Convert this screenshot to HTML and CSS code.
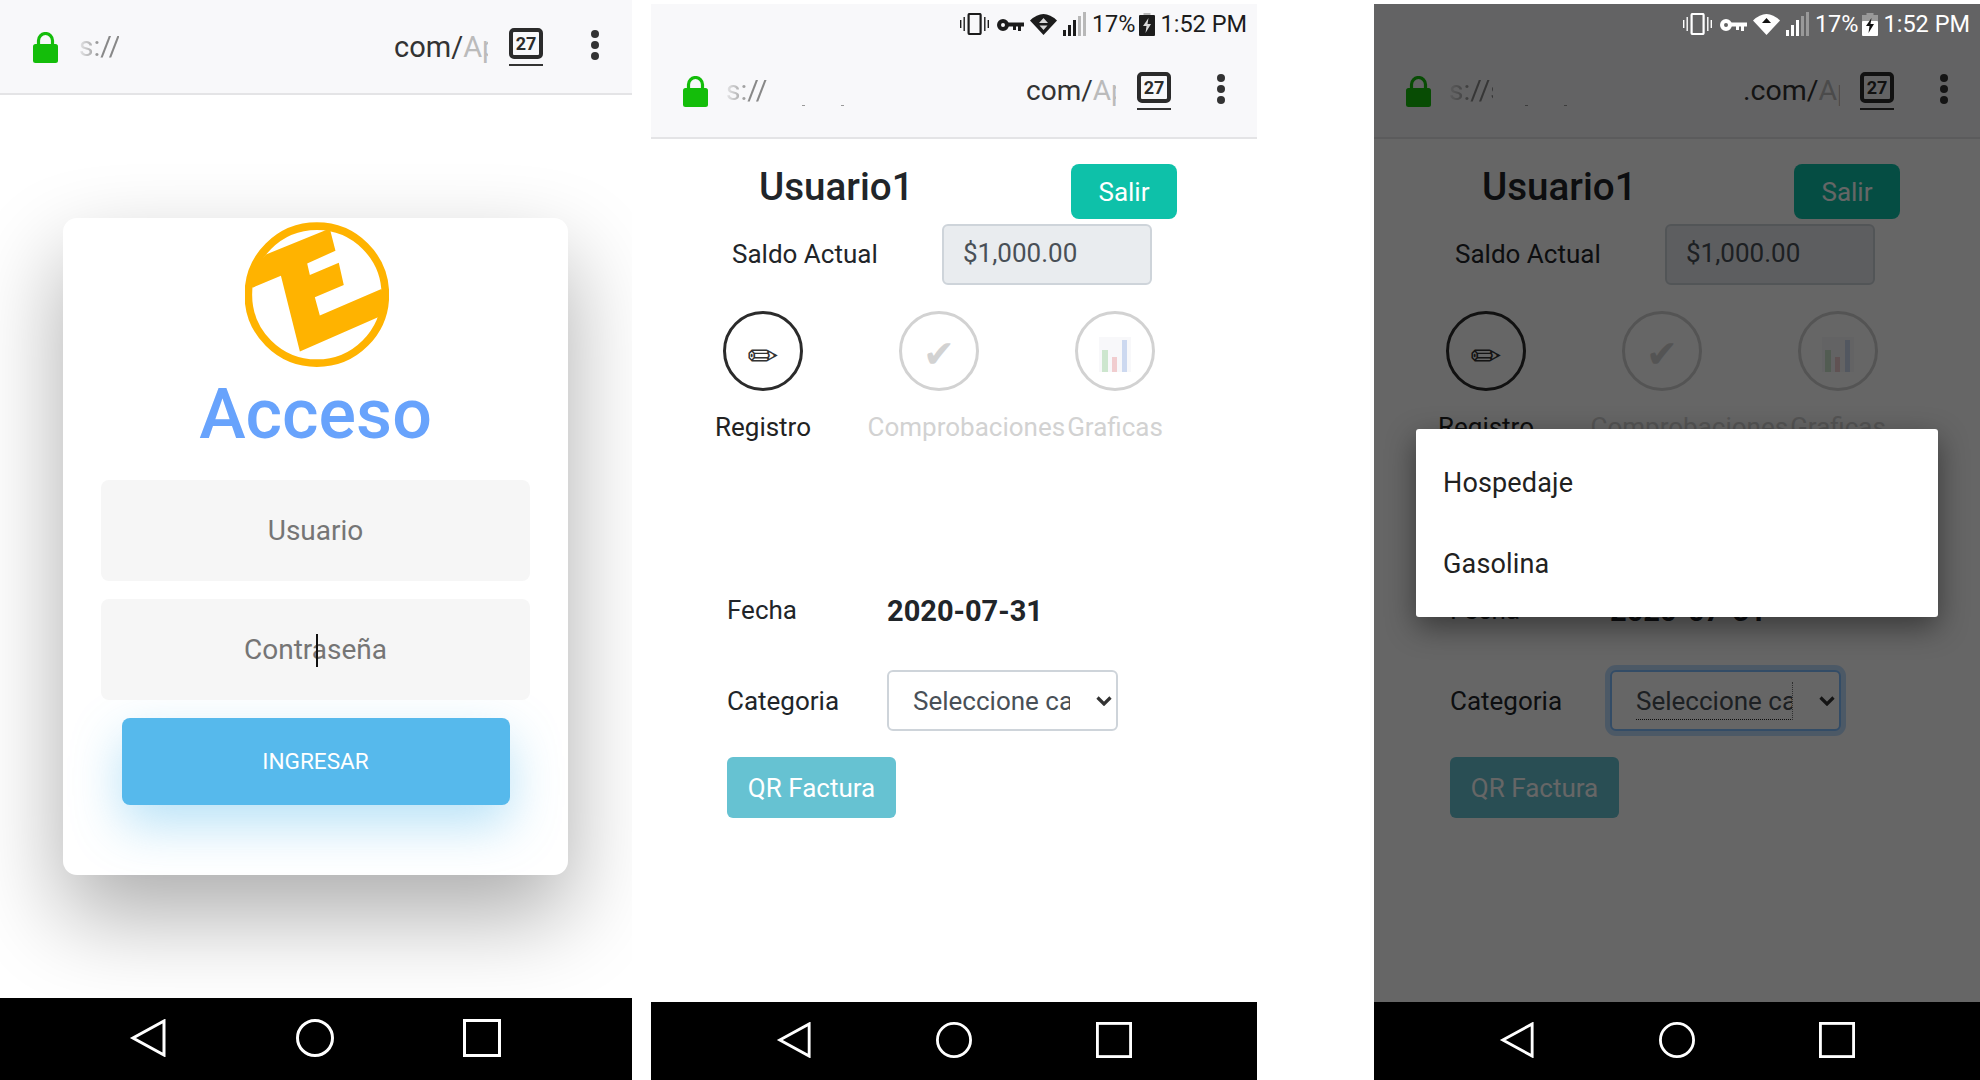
FILE: index.html
```html
<!DOCTYPE html>
<html lang="en">
<head>
    <meta charset="UTF-8">
    <title>Acceso</title>
    <link rel="stylesheet" href="styles.css">
</head>
<body>
    <!-- Login -->
    <section class="phone phone-login">
        <div class="chrome">
            <div class="url-bar">
                <svg class="lock" viewBox="0 0 25 31"><path d="M5.5 14V8.5a7 7 0 0 1 14 0V14" fill="none" stroke="currentColor" stroke-width="3.2"/><rect y="12" width="25" height="19" rx="2.5" fill="currentColor"/></svg>
                <div class="url-start">s://</div>
                <div class="url-end">com/<span class="url-faint">Ap</span></div>
                <div class="tabs"><span class="tabs-count">27</span></div>
                <div class="menu-dots"><i></i><i></i><i></i></div>
            </div>
        </div>
        <main class="login-main">
            <div class="login-card">
                <svg class="logo" viewBox="75 37 433 433">
                    <clipPath id="logo-clip"><circle cx="291" cy="254" r="210"/></clipPath>
                    <circle cx="291" cy="254" r="206" fill="#fff" stroke="#ffb300" stroke-width="23"/>
                    <polygon clip-path="url(#logo-clip)" fill="#ffb300" points="138,133 330,55 347,122 262,160 270,195 357,158 372,225 285,262 300,317 485,237 510,300 475,322 240,425 183,197 98,233 80,200"/>
                </svg>
                <h1 class="login-title">Acceso</h1>
                <input class="login-input" type="text" placeholder="Usuario">
                <div class="password-field">
                    <input class="login-input" type="password" placeholder="Contraseña">
                    <span class="caret"></span>
                </div>
                <button class="login-btn">INGRESAR</button>
            </div>
        </main>
        <nav class="nav-bar">
            <svg viewBox="0 0 38 38"><polygon points="35,2 35,36 4,19"/></svg>
            <svg viewBox="0 0 38 38"><circle cx="19" cy="19" r="17.5"/></svg>
            <svg viewBox="0 0 38 38"><rect x="1.5" y="1.5" width="35" height="35"/></svg>
        </nav>
    </section>

    <!-- Registro -->
    <section class="phone phone-app">
        <div class="chrome">
            <div class="status-bar">
                <svg class="st-vibrate" viewBox="0 0 29 22"><path d="M0.7 7v8M4.2 4v14M24.8 4v14M28.3 7v8" stroke="currentColor" stroke-width="1.4"/><rect x="8.6" y="1" width="12" height="20" rx="1" fill="none" stroke="currentColor" stroke-width="2.2"/></svg>
                <svg class="st-key" viewBox="0 0 27 12"><circle cx="6" cy="6" r="4" fill="none" stroke="currentColor" stroke-width="4"/><path d="M9 3.5h18v4h-3V12h-3V7.5h-2V11h-3V7.5H9z" fill="currentColor"/></svg>
                <svg class="st-wifi" viewBox="0 0 27 22"><path d="M0 7.5Q13.5-5.5 27 7.5L13.5 22z" fill="currentColor"/><path class="st-cut" d="M13.5 5l4.5 5H9zM9.5 12.5h8l-4 4.5z"/></svg>
                <svg class="st-signal" viewBox="0 0 23 24"><g fill="currentColor"><rect y="18" width="3" height="6"/><rect x="5" y="13" width="3" height="11"/><rect x="10" y="8" width="3" height="16"/></g><g class="st-weak"><rect x="15" y="4" width="3" height="20"/><rect x="20" width="3" height="24"/></g></svg>
                <span class="st-text">17%</span>
                <svg class="st-battery" viewBox="0 0 16 23"><rect x="4.5" width="7" height="3" class="st-weak"/><rect y="2" width="16" height="21" rx="1" fill="currentColor"/><path class="st-cut" d="M9.5 5L4 13h3.5l-1 7L12 11H8.5z"/></svg>
                <span class="st-text st-time">1:52 PM</span>
            </div>
            <div class="url-bar">
                <svg class="lock" viewBox="0 0 25 31"><path d="M5.5 14V8.5a7 7 0 0 1 14 0V14" fill="none" stroke="currentColor" stroke-width="3.2"/><rect y="12" width="25" height="19" rx="2.5" fill="currentColor"/></svg>
                <div class="url-start">s://</div>
                <span class="speck"></span><span class="speck"></span>
                <div class="url-end">com/<span class="url-faint">Ap</span></div>
                <div class="tabs"><span class="tabs-count">27</span></div>
                <div class="menu-dots"><i></i><i></i><i></i></div>
            </div>
        </div>
        <main class="app-main">
            <div class="user-row">
                <h2 class="user-name">Usuario1</h2>
                <button class="btn btn-exit">Salir</button>
            </div>
            <div class="balance-row">
                <span class="balance-label">Saldo Actual</span>
                <div class="balance-value">$1,000.00</div>
            </div>
            <div class="steps">
                <div class="step step-on">
                    <div class="step-circle"><span class="step-glyph">✏</span></div>
                    <div class="step-label">Registro</div>
                </div>
                <div class="step">
                    <div class="step-circle"><span class="step-glyph step-glyph-check">✔</span></div>
                    <div class="step-label">Comprobaciones</div>
                </div>
                <div class="step">
                    <div class="step-circle">
                        <svg class="step-chart" viewBox="0 0 32 35"><rect width="32" height="35" fill="#f6f6f9"/><rect x="3" y="13" width="6" height="22" fill="#b9dcba"/><rect x="13" y="20" width="5" height="15" fill="#ecb9bb"/><rect x="23" y="3" width="5" height="32" fill="#b9c9ea"/></svg>
                    </div>
                    <div class="step-label">Graficas</div>
                </div>
            </div>
            <div class="form-row form-row-date">
                <span class="form-label">Fecha</span>
                <strong class="form-date">2020-07-31</strong>
            </div>
            <div class="form-row form-row-cat">
                <span class="form-label">Categoria</span>
                <div class="select-box">
                    <span class="select-text">Seleccione categoria</span>
                    <svg class="select-arrow" viewBox="0 0 16 10"><path d="M1.5 1.5L8 8l6.5-6.5" fill="none" stroke="currentColor" stroke-width="3.2"/></svg>
                </div>
            </div>
            <button class="btn btn-qr">QR Factura</button>
        </main>
        <nav class="nav-bar">
            <svg viewBox="0 0 38 38"><polygon points="35,2 35,36 4,19"/></svg>
            <svg viewBox="0 0 38 38"><circle cx="19" cy="19" r="17.5"/></svg>
            <svg viewBox="0 0 38 38"><rect x="1.5" y="1.5" width="35" height="35"/></svg>
        </nav>
    </section>

    <!-- Registro with the category picker open -->
    <section class="phone phone-app phone-dim">
        <div class="chrome">
            <div class="status-bar">
                <svg class="st-vibrate" viewBox="0 0 29 22"><path d="M0.7 7v8M4.2 4v14M24.8 4v14M28.3 7v8" stroke="currentColor" stroke-width="1.4"/><rect x="8.6" y="1" width="12" height="20" rx="1" fill="none" stroke="currentColor" stroke-width="2.2"/></svg>
                <svg class="st-key" viewBox="0 0 27 12"><circle cx="6" cy="6" r="4" fill="none" stroke="currentColor" stroke-width="4"/><path d="M9 3.5h18v4h-3V12h-3V7.5h-2V11h-3V7.5H9z" fill="currentColor"/></svg>
                <svg class="st-wifi" viewBox="0 0 27 22"><path d="M0 7.5Q13.5-5.5 27 7.5L13.5 22z" fill="currentColor"/><path class="st-cut" d="M13.5 5l4.5 5H9z"/></svg>
                <svg class="st-signal" viewBox="0 0 23 24"><g fill="currentColor"><rect y="18" width="3" height="6"/><rect x="5" y="13" width="3" height="11"/><rect x="10" y="8" width="3" height="16"/></g><g class="st-weak"><rect x="15" y="4" width="3" height="20"/><rect x="20" width="3" height="24"/></g></svg>
                <span class="st-text">17%</span>
                <svg class="st-battery" viewBox="0 0 16 23"><rect x="4.5" width="7" height="3" class="st-weak"/><rect y="2" width="16" height="8" class="st-weak"/><rect y="8" width="16" height="15" rx="1" fill="currentColor"/><path class="st-cut" d="M9.5 5L4 13h3.5l-1 7L12 11H8.5z"/></svg>
                <span class="st-text st-time">1:52 PM</span>
            </div>
            <div class="url-bar">
                <svg class="lock" viewBox="0 0 25 31"><path d="M5.5 14V8.5a7 7 0 0 1 14 0V14" fill="none" stroke="currentColor" stroke-width="3.2"/><rect y="12" width="25" height="19" rx="2.5" fill="currentColor"/></svg>
                <div class="url-start">s://s</div>
                <span class="speck"></span><span class="speck"></span>
                <div class="url-end">.com/<span class="url-faint">Ap</span></div>
                <div class="tabs"><span class="tabs-count">27</span></div>
                <div class="menu-dots"><i></i><i></i><i></i></div>
            </div>
        </div>
        <main class="app-main">
            <div class="user-row">
                <h2 class="user-name">Usuario1</h2>
                <button class="btn btn-exit">Salir</button>
            </div>
            <div class="balance-row">
                <span class="balance-label">Saldo Actual</span>
                <div class="balance-value">$1,000.00</div>
            </div>
            <div class="steps">
                <div class="step step-on">
                    <div class="step-circle"><span class="step-glyph">✏</span></div>
                    <div class="step-label">Registro</div>
                </div>
                <div class="step">
                    <div class="step-circle"><span class="step-glyph step-glyph-check">✔</span></div>
                    <div class="step-label">Comprobaciones</div>
                </div>
                <div class="step">
                    <div class="step-circle">
                        <svg class="step-chart" viewBox="0 0 32 35"><rect width="32" height="35" fill="#f6f6f9"/><rect x="3" y="13" width="6" height="22" fill="#b9dcba"/><rect x="13" y="20" width="5" height="15" fill="#ecb9bb"/><rect x="23" y="3" width="5" height="32" fill="#b9c9ea"/></svg>
                    </div>
                    <div class="step-label">Graficas</div>
                </div>
            </div>
            <div class="form-row form-row-date">
                <span class="form-label">Fecha</span>
                <strong class="form-date">2020-07-31</strong>
            </div>
            <div class="form-row form-row-cat">
                <span class="form-label">Categoria</span>
                <div class="select-box select-focus">
                    <span class="select-text">Seleccione categoria</span>
                    <svg class="select-arrow" viewBox="0 0 16 10"><path d="M1.5 1.5L8 8l6.5-6.5" fill="none" stroke="currentColor" stroke-width="3.2"/></svg>
                </div>
            </div>
            <button class="btn btn-qr">QR Factura</button>
        </main>
        <nav class="nav-bar">
            <svg viewBox="0 0 38 38"><polygon points="35,2 35,36 4,19"/></svg>
            <svg viewBox="0 0 38 38"><circle cx="19" cy="19" r="17.5"/></svg>
            <svg viewBox="0 0 38 38"><rect x="1.5" y="1.5" width="35" height="35"/></svg>
        </nav>
        <div class="dim-layer"></div>
        <ul class="picker">
            <li>Hospedaje</li>
            <li>Gasolina</li>
        </ul>
    </section>
</body>
</html>
```

FILE: styles.css
```css
* {
    box-sizing: border-box;
}

html,
body {
    height: 100%;
}

body {
    margin: 0;
    background-color: #fff;
    font-family: Roboto, "Liberation Sans", sans-serif;
    color: #212529;
    display: flex;
    overflow: hidden;
}

.phone {
    position: relative;
    display: flex;
    flex-direction: column;
    flex: none;
    overflow: hidden;
}

.phone-login {
    width: 632px;
    height: 1080px;
}

.phone-app {
    width: 606px;
    height: 1076px;
    margin-top: 4px;
    margin-left: 19px;
}

.phone-dim {
    margin-left: 117px;
}

/* browser chrome */
.chrome {
    flex: none;
    background-color: #f8f8fa;
    border-bottom: 2px solid #e4e4e6;
}

.status-bar {
    height: 40px;
    padding: 9px 10px 0 0;
    display: flex;
    justify-content: flex-end;
    align-items: flex-start;
    color: #1c1c1c;
    position: relative;
    z-index: 2;
}

.st-vibrate {
    width: 29px;
    height: 22px;
}

.st-key {
    width: 27px;
    height: 12px;
    margin: 6px 0 0 8px;
}

.st-wifi {
    width: 27px;
    height: 22px;
    margin-left: 6px;
}

.st-signal {
    width: 23px;
    height: 24px;
    margin: -1px 0 0 6px;
}

.st-battery {
    width: 16px;
    height: 23px;
    margin-left: 3px;
}

.st-text {
    font-size: 23.5px;
    line-height: 23px;
    margin-left: 6px;
}

.st-cut {
    fill: #d8d8d8;
}

.st-weak {
    fill: #b8b8b8;
}

.url-bar {
    height: 93px;
    padding: 0 32px;
    display: flex;
    align-items: center;
    font-size: 28px;
    color: #333;
}

.phone-login .url-bar {
    padding: 0 33px;
}

.lock {
    width: 25px;
    height: 31px;
    color: #14bd0a;
    flex: none;
    margin-top: 2px;
}

.url-start {
    margin-left: 18px;
    width: 44px;
    overflow: hidden;
    white-space: nowrap;
    color: #888;
    -webkit-mask-image: linear-gradient(to right, rgba(0, 0, 0, 0.15), #000 55%);
    mask-image: linear-gradient(to right, rgba(0, 0, 0, 0.15), #000 55%);
}

.phone-login .url-start {
    margin-left: 21px;
    width: 40px;
}

.speck {
    width: 3px;
    height: 1px;
    background-color: #999;
    margin: 30px 0 0 32px;
}

.speck + .speck {
    margin-left: 36px;
}

.url-end {
    margin-left: auto;
    width: 90px;
    overflow: hidden;
    white-space: nowrap;
}

.phone-login .url-end {
    width: 94px;
    font-size: 29px;
}

.phone-dim .url-end {
    width: 97px;
    margin-right: -1px;
    font-size: 28.5px;
}

.url-faint {
    color: #bbb;
}

.tabs {
    width: 34px;
    height: 31px;
    margin: -6px 0 0 21px;
    border: 4px solid #2b2b2b;
    border-radius: 5px;
    position: relative;
    display: flex;
    justify-content: center;
    align-items: center;
    font-size: 18px;
    font-weight: 700;
    color: #2b2b2b;
    flex: none;
}

.tabs::after {
    content: "";
    position: absolute;
    left: -4px;
    right: -4px;
    bottom: -11px;
    height: 2px;
    background-color: #333;
}

.menu-dots {
    margin-left: 46px;
    margin-top: -4px;
    display: flex;
    flex-direction: column;
    gap: 3px;
}

.phone-login .menu-dots {
    margin-left: 48px;
}

.menu-dots i {
    width: 8px;
    height: 8px;
    border-radius: 50%;
    background-color: #333;
}

/* android nav */
.nav-bar {
    flex: none;
    height: 78px;
    background-color: #000;
    padding: 20px 0 0 125px;
    display: flex;
    gap: 124px;
}

.phone-login .nav-bar {
    height: 82px;
    padding: 21px 0 0 129px;
    gap: 129px;
}

.nav-bar svg {
    width: 36px;
    height: 36px;
    fill: none;
    stroke: #fff;
    stroke-width: 3;
}

.phone-login .nav-bar svg {
    width: 38px;
    height: 38px;
}

/* login page */
.login-main {
    flex: 1;
    min-height: 0;
    background-color: #fff;
    overflow: hidden;
    padding: 123px 0 0 63px;
}

.login-card {
    width: 505px;
    padding: 4px 38px 70px;
    background-color: #fff;
    border-radius: 14px;
    box-shadow: 0 40px 90px rgba(0, 0, 0, 0.33);
    display: flex;
    flex-direction: column;
    align-items: center;
}

.logo {
    width: 144px;
    height: 145px;
    margin-left: 3px;
    flex: none;
}

.login-title {
    margin: 5px 0 24px;
    font-size: 70px;
    line-height: 84px;
    font-weight: 500;
    color: #68a3fc;
}

.login-input {
    width: 100%;
    height: 101px;
    border: none;
    border-radius: 8px;
    background-color: #f6f6f6;
    font-family: inherit;
    font-size: 28px;
    text-align: center;
    outline: none;
}

.login-input::placeholder {
    color: #757575;
    opacity: 1;
}

.password-field {
    width: 100%;
    margin-top: 18px;
    position: relative;
    display: flex;
}

.caret {
    position: absolute;
    left: 215px;
    top: 35px;
    width: 2px;
    height: 33px;
    background-color: #111;
}

.login-btn {
    width: 388px;
    height: 87px;
    margin-top: 18px;
    border: none;
    border-radius: 8px;
    background-color: #56b9ec;
    color: #fff;
    font-family: inherit;
    font-size: 22.6px;
    box-shadow: 0 20px 50px rgba(86, 185, 236, 0.42);
}

/* app page */
.app-main {
    flex: 1;
    min-height: 0;
    background-color: #fff;
    font-size: 26px;
    line-height: 38px;
}

.user-row {
    margin-top: 25px;
    padding-left: 108px;
    display: flex;
}

.user-name {
    width: 312px;
    margin: 0;
    font-size: 38.6px;
    line-height: 46px;
    font-weight: 500;
}

.btn {
    border: none;
    border-radius: 8px;
    color: #fff;
    font-family: inherit;
    font-size: 26px;
    flex: none;
}

.btn-exit {
    width: 106px;
    height: 55px;
    background-color: #0ec1a9;
}

.balance-row {
    margin-top: 5px;
    padding-left: 81px;
    display: flex;
    align-items: center;
}

.balance-label {
    width: 210px;
    margin-top: -2px;
}

.balance-value {
    width: 210px;
    height: 61px;
    padding-left: 19px;
    background-color: #e9ecef;
    border: 2px solid #ced4da;
    border-radius: 6px;
    color: #495057;
    line-height: 55px;
}

.steps {
    margin: 26px 0 0 24px;
    display: grid;
    grid-template-columns: repeat(3, 176px);
}

.step {
    display: flex;
    flex-direction: column;
    align-items: center;
    color: #d2d2d2;
}

.step-on {
    color: #222;
}

.step-circle {
    width: 80px;
    height: 80px;
    border: 3.5px solid currentColor;
    border-radius: 50%;
    display: flex;
    justify-content: center;
    align-items: center;
}

.step-on .step-circle {
    border-color: #2b2b2b;
}

.step-glyph {
    font-family: "DejaVu Sans", sans-serif;
    font-size: 37px;
    line-height: 1;
    padding-top: 10px;
    color: #333;
}

.step-glyph-check {
    font-size: 38px;
    padding-top: 6px;
    color: #d2d2d2;
}

.step-chart {
    width: 32px;
    height: 35px;
    margin-top: 6px;
    opacity: 0.7;
}

.step-label {
    width: 143px;
    margin-top: 17px;
    text-align: center;
    white-space: nowrap;
}

.form-row {
    padding-left: 76px;
    display: flex;
    align-items: center;
}

.form-row-date {
    margin-top: 145px;
}

.form-row-date .form-label {
    margin-top: -2px;
}

.form-row-cat {
    margin-top: 40px;
}

.form-label {
    width: 160px;
    flex: none;
}

.form-date {
    margin-top: 1px;
    font-size: 29px;
    font-weight: 700;
}

.select-box {
    width: 231px;
    height: 61px;
    padding: 0 4px 0 24px;
    background-color: #fff;
    border: 2px solid #ced4da;
    border-radius: 6px;
    display: flex;
    align-items: center;
    color: #495057;
}

.select-text {
    width: 157px;
    overflow: hidden;
    white-space: nowrap;
    flex: none;
}

.select-arrow {
    width: 16px;
    height: 10px;
    margin-left: 26px;
    color: #333;
}

.btn-qr {
    display: block;
    width: 169px;
    height: 61px;
    margin: 26px 0 0 76px;
    background-color: #66c2d2;
    border-radius: 6px;
}

/* open picker */
.phone-dim .status-bar {
    color: #fff;
}

.phone-dim .st-cut {
    fill: #111;
}

.phone-dim .st-weak {
    fill: #999;
}

.dim-layer {
    position: absolute;
    top: 0;
    left: 0;
    right: 0;
    bottom: 78px;
    background-color: rgba(0, 0, 0, 0.6);
    z-index: 1;
}

.select-focus {
    border-color: #80bdff;
    box-shadow: 0 0 0 5px rgba(128, 189, 255, 0.5);
}

.select-focus .select-text {
    height: 38px;
    border-right: 1px dotted #777;
    border-bottom: 1px dotted #222;
}

.picker {
    position: absolute;
    left: 42px;
    top: 425px;
    width: 522px;
    height: 188px;
    margin: 0;
    padding: 22px 0 0 27px;
    list-style: none;
    background-color: #fff;
    border-radius: 3px;
    box-shadow: 0 10px 30px rgba(0, 0, 0, 0.45);
    z-index: 2;
    font-size: 27px;
    letter-spacing: 0.15px;
    color: #212121;
}

.picker li {
    height: 81px;
    line-height: 64px;
}
```
